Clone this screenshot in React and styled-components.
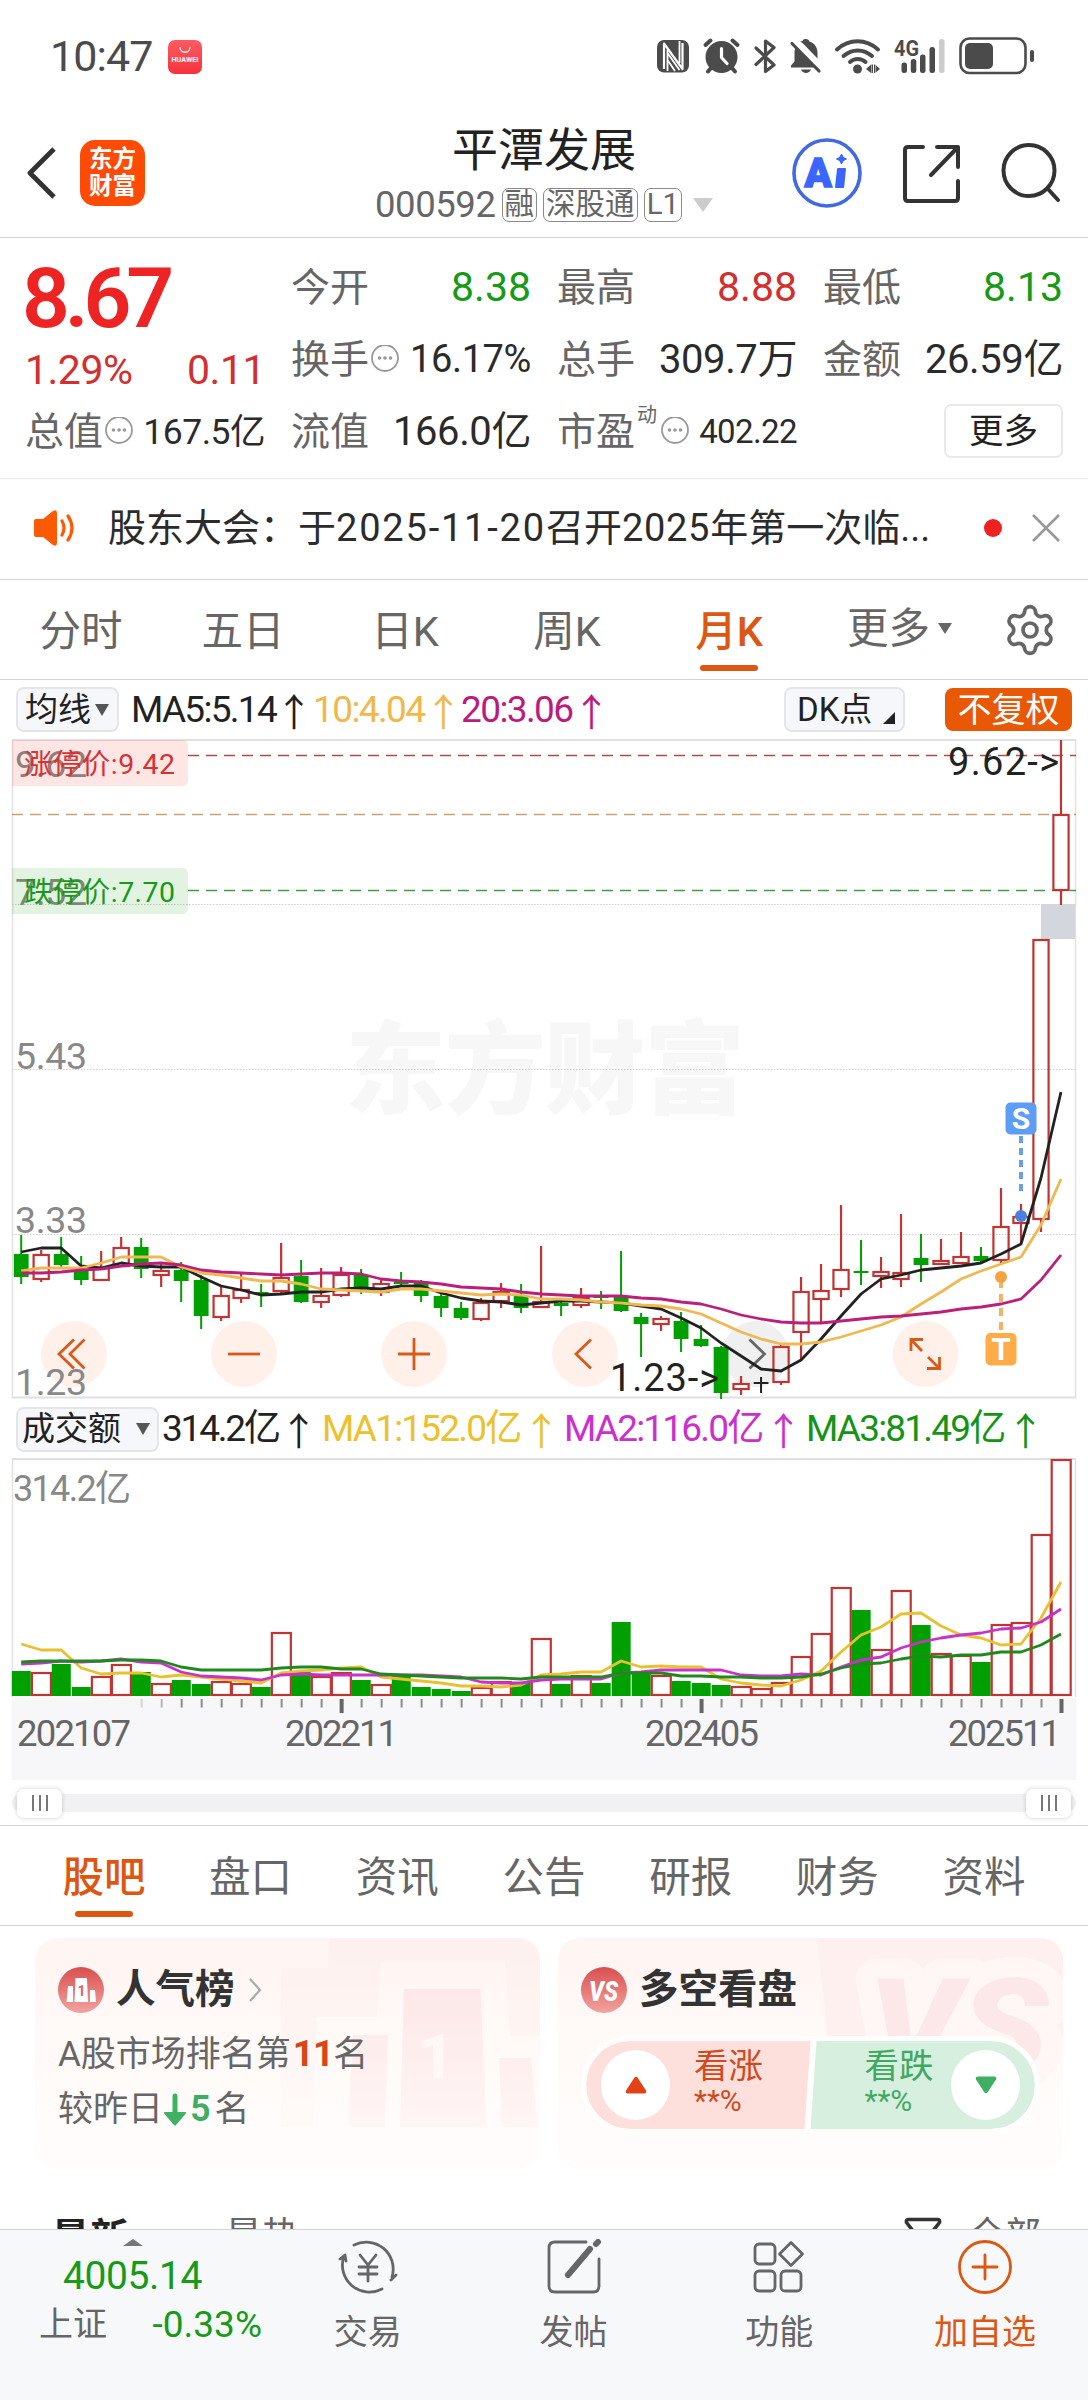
import React from 'react';
import styled, { createGlobalStyle, css } from 'styled-components';
import { Settings } from 'lucide-react';

const RED = '#d32f2f';
const GREEN = '#179a17';
const ORANGE = '#dd5712';
const GRAY = '#666';
const FONT = 'Roboto, "Noto Sans CJK SC", sans-serif';

const GlobalStyle = createGlobalStyle`
  body {
    margin: 0;
    background: #fff;
    font-family: ${FONT};
    color: #2b2b2b;
  }
`;

const Screen = styled.div`
  width: 1088px;
  height: 2400px;
  overflow: hidden;
  display: flex;
  flex-direction: column;
  background: #fff;
  line-height: 1.2;
  white-space: nowrap;

  & > * {
    flex-shrink: 0;
    box-sizing: border-box;
  }
`;

const Txt = styled.span`
  font-size: ${p => p.$size}px;
  line-height: 1.2;
  font-weight: ${p => p.$weight || 400};
  letter-spacing: ${p => p.$ls || 0}px;
  margin-left: ${p => p.$ml || 0}px;
  color: ${p => p.$color || 'inherit'};
`;

/* ---------- status bar ---------- */

const StatusBar = styled.div`
  height: 114px;
  padding: 0 54px 0 50px;
  display: flex;
  align-items: center;
  justify-content: space-between;
  color: #4b4b4b;
`;

const StatusSide = styled.div`
  display: flex;
  align-items: center;
`;

const StoreIcon = styled.div`
  width: 34px;
  height: 34px;
  margin-left: 15px;
  border-radius: 7px;
  background: linear-gradient(#ff5a60, #f5333f);
`;

const StatusIcons = () => (
  <svg width="378" height="40" viewBox="656 37 378 40" fill="#4b4b4b">
    <rect x="657" y="40" width="32" height="32.500" rx="7" />
    <path d="M664 69V43.500L682.500 69V43" stroke="#fff" strokeWidth="2.200" fill="none" strokeLinejoin="round" />
    <path d="M667.500 49.500V71M679.500 63V41M667.500 53l12 17M667.500 60l7.500 11" stroke="#fff" strokeWidth="1.800" fill="none" />

    <circle cx="721.500" cy="57" r="16" />
    <path d="M705.500 45l5-4.500M737.500 45l-5-4.500M711 68l-3 3.500M732 68l3 3.500" stroke="#4b4b4b" strokeWidth="4" strokeLinecap="round" />
    <path d="M721.500 48.500v9l5.500 6" stroke="#fff" strokeWidth="3.200" fill="none" strokeLinecap="round" />

    <path d="M756 48l18 17-8.500 6.500V41l8.500 6.500-18 17" stroke="#4b4b4b" strokeWidth="3.200" fill="none" strokeLinejoin="round" strokeLinecap="round" />

    <path d="M806 39c2 0 3 1 3.500 2.500 5 1.500 8 6 8 11v6l-14-14.500-3-2.500 2-.500c.500-1.500 1.500-2 3.500-2zM795.500 48l19 19.500H791v-2l3.500-4v-9c0-2 .300-3 1-4.500z" />
    <path d="M801 69.500h10c-1.500 4.500-8.500 4.500-10 0z" />
    <path d="M792 43.500l27 27.500" stroke="#4b4b4b" strokeWidth="3.200" strokeLinecap="round" />

    <g stroke="#4b4b4b" strokeWidth="4" fill="none" strokeLinecap="round">
      <path d="M837 49.500c12-11 29-11 41 0" />
      <path d="M843.500 56c8.500-7.500 20-7.500 28.500 0" />
      <path d="M850 62c4.500-4 11-4 15.500 0" />
    </g>
    <circle cx="857.500" cy="69" r="4.500" />
    <path d="M866 69l5-4.500V73zM880 69l-5-4.500V73zM871.500 64.500h1.500V73h-1.500zM874 64.500h1.500V73H874z" />

    <text x="894" y="56" fontSize="22.500" fontWeight="700" textLength="25" lengthAdjust="spacingAndGlyphs">4G</text>
    <rect x="901.500" y="62.500" width="5.500" height="10.500" rx="2.500" />
    <rect x="910.800" y="59" width="5.500" height="14" rx="2.500" />
    <rect x="920" y="54.500" width="5.500" height="18.500" rx="2.500" />
    <rect x="929.500" y="47" width="5.500" height="26" rx="2.500" />
    <rect x="939" y="39" width="5.500" height="34" rx="2.500" fill="#ccc" />

    <rect x="960.500" y="38.500" width="65" height="34.500" rx="9" fill="none" stroke="#4b4b4b" strokeWidth="2.600" />
    <rect x="965" y="43" width="28" height="26" rx="5" />
    <rect x="1030" y="50" width="4" height="12" rx="2" />
  </svg>
);

/* ---------- title bar ---------- */

const Header = styled.div`
  height: 124px;
  padding: 0 27px 6px 27px;
  border-bottom: 1px solid #d4d4d4;
  display: grid;
  grid-template-columns: 1fr auto 1fr;
  align-items: center;
`;

const HeaderSide = styled.div`
  display: flex;
  align-items: center;
  justify-content: ${p => (p.$end ? 'flex-end' : 'flex-start')};
`;

const Logo = styled.div`
  width: 65px;
  height: 66px;
  margin-left: 24px;
  border-radius: 15px;
  background: #ff4b05;
  color: #fff;
  font-size: 23.5px;
  font-weight: 700;
  line-height: 27px;
  display: flex;
  flex-direction: column;
  align-items: center;
  justify-content: center;
`;

const AssistantIcon = styled.svg`
  margin-right: 38px;
  font-family: ${FONT};
`;

const TitleBlock = styled.div`
  display: flex;
  flex-direction: column;
  align-items: center;
`;

const Title = styled.div`
  font-size: 46px;
  line-height: 56px;
  margin-bottom: 9px;
  color: #222;
`;

const CodeRow = styled.div`
  height: 36px;
  display: flex;
  align-items: center;
  gap: 6px;
  color: ${GRAY};
`;

const Tag = styled.span`
  box-sizing: border-box;
  height: 34px;
  padding: 0 2px;
  border: 1.5px solid #8a8a8a;
  border-radius: 7px;
  font-size: 29.5px;
  line-height: 31px;
`;

const Triangle = styled.i`
  width: 0;
  height: 0;
  border-left: ${p => p.$w / 2}px solid transparent;
  border-right: ${p => p.$w / 2}px solid transparent;
  border-top: ${p => (p.$up ? 0 : p.$h)}px solid ${p => p.$color};
  border-bottom: ${p => (p.$up ? p.$h : 0)}px solid ${p => p.$color};
  margin-left: ${p => p.$ml || 0}px;
`;

/* ---------- quote ---------- */

const Quote = styled.div`
  height: 241px;
  padding: 14px 25px 0 25px;
  border-bottom: 1px solid #e8e8e8;
  display: grid;
  grid-template-columns: repeat(4, 1fr);
  grid-template-rows: 72px 72px 72px;
  column-gap: 26px;
`;

const PriceCell = styled.div`
  grid-row: span 2;
  padding-top: 11px;
  color: ${RED};
`;

const Price = styled.div`
  height: 72px;
  line-height: 72px;
  font-size: 84px;
  font-weight: 600;
  letter-spacing: -5.2px;
  margin-left: -3px;
  color: #ee2424;
`;

const Change = styled.div`
  height: 72px;
  display: flex;
  align-items: center;
  justify-content: space-between;
  font-size: 41px;
  letter-spacing: -0.5px;
`;

const Cell = styled.div`
  display: flex;
  align-items: center;
  color: ${GRAY};
  font-size: 39px;

  ${Txt}:last-child {
    margin-left: auto;
  }
`;

const Sup = styled.span`
  align-self: flex-start;
  margin: 7px 2px 0 2px;
  font-size: 20px;
  line-height: 24px;
`;

const MoreButton = styled.button`
  justify-self: end;
  align-self: center;
  width: 119px;
  height: 54px;
  margin-top: -2px;
  padding: 0;
  border: 2px solid #e9e9e9;
  border-radius: 7px;
  background: #fff;
  font: 34.5px/48px ${FONT};
  color: #222;
`;

const InfoDots = () => (
  <svg width="30" height="30" viewBox="0 0 30 30">
    <circle cx="16" cy="13" r="13" fill="none" stroke="#999" strokeWidth="1.800" />
    <circle cx="10.500" cy="13" r="1.800" fill="#999" />
    <circle cx="16" cy="13" r="1.800" fill="#999" />
    <circle cx="21.500" cy="13" r="1.800" fill="#999" />
  </svg>
);

/* ---------- notice ---------- */

const Notice = styled.div`
  height: 101px;
  padding: 0 28px 3px 32px;
  border-bottom: 1px solid #d4d4d4;
  display: flex;
  align-items: center;
  font-size: 38px;
  line-height: 50px;
`;

const NoticeText = styled.div`
  flex: 1;
  margin-left: 32px;
`;

const Dot = styled.i`
  width: 18px;
  height: 18px;
  margin-right: 30px;
  border-radius: 50%;
  background: #f02020;
`;

/* ---------- tabs ---------- */

const TabBar = styled.div`
  height: 100px;
  padding: 0 ${p => p.$pad || 0}px;
  border-bottom: 1px solid #d4d4d4;
  display: flex;
`;

const Tab = styled.div`
  width: ${p => p.$w}px;
  display: flex;
  flex-direction: column;
  align-items: center;
  padding-top: 24px;
  box-sizing: border-box;
  font-size: 41.5px;
  line-height: 56px;
  color: ${GRAY};

  ${p => p.$active && css`
    color: ${ORANGE};
    font-weight: 500;

    &::after {
      content: '';
      width: 58px;
      height: 6px;
      margin-top: 5px;
      border-radius: 3px;
      background: ${ORANGE};
    }
  `}
`;

const TabMore = styled.div`
  display: flex;
  align-items: center;
  margin-left: 37px;
  padding-bottom: 2px;
  font-size: 41.5px;
  line-height: 56px;
  color: ${GRAY};
`;

const GearSlot = styled.div`
  display: flex;
  align-items: center;
  margin-left: 50px;
`;

/* ---------- indicator rows ---------- */

const IndicatorRow = styled.div`
  height: ${p => p.$h}px;
  padding: 0 16px;
  display: flex;
  align-items: center;
`;

const Chip = styled.div`
  box-sizing: border-box;
  width: ${p => p.$w}px;
  height: 45px;
  border: 2px solid #e3e5e9;
  border-radius: 8px;
  background: #f6f7fa;
  display: flex;
  align-items: center;
  padding-left: ${p => p.$pl || 7}px;
  font-size: 33px;
  line-height: 40px;
  color: #222;
`;

const SolidChip = styled(Chip)`
  height: 43px;
  margin-left: 40px;
  border: none;
  background: #e95804;
  color: #fff;
  font-size: 34px;
  justify-content: center;
  padding: 0;
`;

const Corner = styled.i`
  align-self: flex-end;
  margin: 0 0 6px 11px;
  border-left: 12px solid transparent;
  border-bottom: 12px solid #222;
`;

const Value = styled.div`
  box-sizing: border-box;
  width: ${p => p.$w}px;
  padding-left: ${p => p.$pl || 0}px;
  display: flex;
  align-items: center;
  font-size: 37px;
  line-height: 44px;
  letter-spacing: ${p => p.$ls || 0}px;
  color: ${p => p.$color};
`;

const Arrow = styled.span`
  width: 20px;
  margin-left: ${p => p.$ml || 6}px;
  display: flex;
  justify-content: center;
  font-family: "Noto Sans CJK SC", sans-serif;
  font-size: 38px;
  letter-spacing: 0;
`;

const Spacer = styled.div`
  flex: 1;
`;

/* ---------- charts ---------- */

const STEP = 19.996;
const xAt = i => 21.2 + i * STEP;

// [direction, high, body top, body bottom, low], in chart pixels
const CANDLES = [
  ['g', 495, 514, 537, 544], ['r', 510, 514, 540, 542], ['g', 497, 514, 525, 527],
  ['g', 516, 530, 540, 545], ['r', 511, 527, 541, 541], ['r', 497, 507, 527, 527],
  ['g', 498, 507, 529, 538], ['r', 523, 530, 536, 547], ['g', 522, 530, 541, 562],
  ['g', 535, 540, 576, 589], ['r', 547, 555, 578, 581], ['r', 533, 549, 559, 563],
  ['g', 544, 552, 553, 567], ['r', 503, 537, 552, 553], ['g', 520, 536, 562, 563],
  ['r', 528, 555, 563, 568], ['r', 527, 534, 556, 557], ['g', 529, 535, 549, 554],
  ['r', 540, 543, 553, 556], ['g', 532, 542, 544, 547], ['g', 540, 543, 556, 562],
  ['g', 553, 556, 568, 577], ['g', 562, 568, 578, 580], ['r', 558, 562, 580, 581],
  ['r', 543, 551, 562, 568], ['g', 544, 556, 568, 573], ['r', 506, 561, 568, 568],
  ['g', 562, 563, 566, 576], ['r', 548, 557, 566, 568], ['g', 551, 556, 557, 569],
  ['g', 511, 557, 571, 572], ['g', 573, 577, 584, 617], ['r', 576, 578, 585, 591],
  ['g', 572, 581, 599, 612], ['g', 585, 599, 606, 607], ['g', 606, 607, 653, 659],
  ['r', 636, 643, 650, 655], ['k', 637, 642, 644, 653], ['r', 605, 606, 643, 645],
  ['r', 537, 551, 593, 620], ['r', 524, 550, 560, 582], ['r', 465, 529, 550, 557],
  ['g', 500, 531, 532, 545], ['r', 517, 531, 537, 548], ['r', 474, 532, 540, 547],
  ['g', 494, 518, 525, 542], ['r', 499, 520, 525, 525], ['r', 492, 516, 524, 524],
  ['g', 507, 516, 521, 522], ['r', 448, 486, 521, 523], ['r', 464, 476, 484, 503],
  ['r', 199, 199, 480, 492], ['r', 0, 74, 151, 165],
];

const MA5 = [512, 508, 508, 526, 528, 523, 526, 527, 527, 537, 546, 550, 555, 554, 552, 552, 549, 548, 549, 546, 546, 553, 558, 561, 562, 565, 563, 561, 561, 562, 563, 566, 569, 578, 588, 603, 616, 629, 631, 620, 599, 576, 554, 539, 535, 530, 528, 526, 523, 514, 504, 438, 352];
const MA10 = [531, 528, 528, 528, 523, 517, 517, 517, 527, 533, 535, 538, 541, 541, 544, 549, 550, 551, 552, 549, 549, 551, 553, 555, 554, 555, 559, 559, 560, 562, 563, 565, 566, 569, 574, 583, 592, 599, 604, 604, 602, 597, 591, 585, 577, 564, 552, 539, 531, 524, 517, 485, 439];
const MA20 = [533, 533, 532, 530, 529, 526, 524, 523, 525, 530, 532, 533, 534, 535, 534, 533, 533, 534, 539, 541, 542, 544, 547, 548, 549, 552, 554, 555, 556, 556, 556, 558, 559, 562, 564, 569, 575, 579, 582, 583, 583, 581, 579, 577, 576, 574, 572, 569, 567, 564, 559, 540, 515];

const VOLUMES = [25, 24, 32, 9, 20, 32, 24, 13, 16, 12, 15, 13, 9, 64, 24, 20, 24, 16, 12, 20, 9, 7, 5, 9, 15, 13, 58, 12, 21, 13, 74, 23, 21, 15, 13, 11, 10, 8, 14, 40, 63, 109, 86, 47, 106, 71, 43, 41, 34, 72, 74, 162, 237];
const VMA1 = [185, 191, 191, 209, 215, 214, 214, 218, 216, 218, 220, 222, 224, 214, 212, 211, 209, 208, 218, 220, 222, 224, 227, 227, 228, 226, 216, 215, 213, 213, 202, 208, 207, 208, 208, 220, 224, 226, 227, 221, 212, 193, 176, 168, 155, 154, 167, 176, 179, 186, 185, 159, 123];
const VMA2 = [205, 204, 202, 203, 202, 200, 203, 204, 213, 217, 218, 219, 221, 216, 215, 216, 216, 216, 216, 216, 216, 217, 218, 223, 224, 224, 221, 220, 220, 220, 214, 213, 211, 211, 211, 211, 216, 217, 217, 215, 216, 208, 201, 198, 189, 183, 179, 176, 174, 170, 169, 163, 150];
const VMA3 = [203, 202, 202, 202, 202, 201, 201, 202, 208, 211, 211, 211, 211, 209, 208, 208, 210, 210, 215, 216, 217, 218, 219, 219, 219, 220, 218, 218, 218, 218, 214, 214, 214, 217, 217, 218, 218, 219, 219, 218, 215, 209, 205, 204, 200, 197, 198, 196, 196, 193, 193, 186, 175];

const CANDLE_COLORS = { r: '#c03434', g: '#00a000', k: '#222' };

const ChartSvg = styled.svg`
  display: block;
  font-family: ${FONT};
`;

const Line = ({ data, color }) => (
  <polyline
    points={data.map((y, i) => `${xAt(i)},${y}`).join(' ')}
    fill="none"
    stroke={color}
    strokeWidth="2.800"
    strokeLinejoin="round"
  />
);

const Candle = ({ i, data: [kind, high, top, bottom, low] }) => {
  const x = xAt(i);
  const color = CANDLE_COLORS[kind];
  if (kind === 'r') {
    return (
      <g stroke={color} strokeWidth="2.200" fill="none">
        <path d={`M${x} ${high}V${top}M${x} ${bottom}V${low}`} />
        <rect x={x - 7.6} y={top + 1} width="15.200" height={Math.max(bottom - top - 2, 2)} />
      </g>
    );
  }
  return (
    <g fill={color}>
      <rect x={x - 1} y={high} width="2" height={low - high} />
      <rect x={x - 7.4} y={top} width="14.800" height={Math.max(bottom - top, 2)} />
    </g>
  );
};

const Limit = ({ y, line, fill, stroke, color, children }) => (
  <g>
    <path d={`M188 ${line}H1076`} stroke={stroke} strokeWidth="1.600" strokeDasharray="11 7" />
    <path d={`M12 ${y}h170q6 0 6 6v34q0 6-6 6H12z`} fill={fill} />
    <text x="24" y={y + 34} fontSize="28.500" fill={color} textLength="151">{children}</text>
  </g>
);

const CONTROLS = [
  { x: 74, d: 'M74 599.500L59 614l15 14.500M84.500 599.500L70 614l14.500 14.500' },
  { x: 244, d: 'M228 614h32' },
  { x: 414, d: 'M398 614h32M414 598v32' },
  { x: 585, d: 'M591 599.500L576 614l15 14.500' },
  { x: 755.5, d: 'M749.500 599.500L764.500 614l-15 14.500', muted: true },
  { x: 925.5, d: 'M923 599.500H911V611M911 599.500L922 611M927 628.500h12.500V617M939.500 628.500L928 617' },
];

const PriceChart = () => (
  <ChartSvg width="1088" height="661" viewBox="0 -1 1088 661">
    <text x="345" y="366" fontSize="101" fontWeight="900" fill="#f7f7f7" textLength="400">东方财富</text>
    <path d="M12 0H1076M12 657.500H1076" stroke="#e0e0e2" strokeWidth="2" />
    <path d="M12.500 0V658M1075.500 0V658" stroke="#e0e0e2" strokeWidth="1.400" />
    <path d="M12 164.500H1076M12 329.500H1076M12 494.500H1076" stroke="#d2d2d2" strokeDasharray="1.500 1.500" />
    <rect x="1041" y="164" width="34" height="35" fill="#d3d7dd" />

    {CONTROLS.map(c => (
      <g key={c.x}>
        <circle cx={c.x} cy="614" r="33" fill={c.muted ? '#f0f0f0' : '#fff1ea'} />
        <path d={c.d} fill="none" stroke={c.muted ? '#666' : '#d75a1c'} strokeWidth="2.800" />
      </g>
    ))}

    <g fontSize="37.500" fill="#888">
      <text x="15" y="37" textLength="72">9.62</text>
      <text x="15" y="165" textLength="72">7.52</text>
      <text x="15" y="329" textLength="72">5.43</text>
      <text x="15" y="493" textLength="72">3.33</text>
      <text x="15" y="655" textLength="72">1.23</text>
    </g>

    <Limit y={0} line={15.5} fill="rgba(245, 50, 40, 0.12)" stroke="#ae4c4c" color="#d93030">涨停价:9.42</Limit>
    <Limit y={128} line={150.5} fill="rgba(20, 160, 20, 0.12)" stroke="#3fa03f" color={GREEN}>跌停价:7.70</Limit>
    <path d="M12 74.500H1076" stroke="#c8a274" strokeWidth="1.600" strokeDasharray="11 7" />

    {CANDLES.map((c, i) => <Candle key={i} i={i} data={c} />)}
    <Line data={MA5} color="#222" />
    <Line data={MA10} color="#efb952" />
    <Line data={MA20} color="#bb1f7a" />

    <text x="948" y="35" fontSize="38" fill="#222" textLength="111">9.62-&gt;</text>
    <text x="610" y="651" fontSize="38" fill="#222" textLength="109">1.23-&gt;</text>

    <path d="M1021 396V453" stroke="#6a9fe6" strokeWidth="4" strokeDasharray="7 5" />
    <circle cx="1021" cy="476" r="6" fill="#4a80e0" />
    <rect x="1005.500" y="362.500" width="31" height="32" rx="5" fill="#5e9df6" />
    <text x="1021" y="389" fontSize="30" fontWeight="700" fill="#fff" textAnchor="middle">S</text>

    <path d="M1001 540V592" stroke="#f5b266" strokeWidth="4" strokeDasharray="8 6" />
    <circle cx="1001" cy="537" r="6" fill="#f7a241" />
    <rect x="985.500" y="593" width="31" height="32.500" rx="5" fill="#ffab47" />
    <text x="1001" y="620" fontSize="31" fontWeight="700" fill="#fff" textAnchor="middle">T</text>
  </ChartSvg>
);

const VolumeChart = () => (
  <ChartSvg width="1088" height="322" viewBox="0 -1 1088 322">
    <rect x="12" y="239" width="1064" height="82" fill="#f7f7fa" />
    <path d="M12 0H1076" stroke="#e0e0e2" strokeWidth="2" />
    <path d="M12.500 0V238M1075.500 0V238" stroke="#e0e0e2" strokeWidth="1.400" />
    <text x="13" y="42" fontSize="36" fill="#888" textLength="118">314.2亿</text>
    {VOLUMES.map((h, i) => (
      CANDLES[i][0] === 'g' ? (
        <rect key={i} x={xAt(i) - 9.4} y={237 - h} width="19" height={h} fill="#00a000" />
      ) : (
        <rect key={i} x={xAt(i) - 9.3} y={238 - h} width="19" height={Math.max(h - 2, 2)} fill="none" stroke="#c03434" strokeWidth="2.200" />
      )
    ))}
    <Line data={VMA1} color="#e8c030" />
    <Line data={VMA2} color="#c832c8" />
    <Line data={VMA3} color="#1e8a1e" />
    {VOLUMES.map((h, i) => {
      if (i < 6) return null;
      const major = i === 16 || i === 34 || i === 52;
      return (
        <rect
          key={i}
          x={xAt(i) - (major ? 1.5 : 0.5)}
          y="240"
          width={major ? 4 : 2}
          height={major ? 14 : 8.5}
          fill={major ? '#666' : '#8c8c8c'}
          opacity={i === 6 ? 0.3 : i === 7 ? 0.6 : 1}
        />
      );
    })}
    <g fontSize="36.500" fill="#666">
      <text x="17" y="287" textLength="114">202107</text>
      <text x="285" y="287" textLength="113">202211</text>
      <text x="645" y="287" textLength="114">202405</text>
      <text x="948" y="287" textLength="113">202511</text>
    </g>
  </ChartSvg>
);

/* ---------- range slider ---------- */

const SliderArea = styled.div`
  height: 46px;
  padding: 8px 12px 0;
  border-bottom: 1px solid #d4d4d4;
`;

const Track = styled.div`
  height: 18px;
  margin-top: 6px;
  padding: 0 5px;
  border-radius: 9px;
  background: #f1f1f4;
  display: flex;
  align-items: center;
  justify-content: space-between;
`;

const Handle = styled.div`
  width: 45px;
  height: 29px;
  border-radius: 7px;
  background: #fff;
  box-shadow: 0 0 5px rgba(0, 0, 0, 0.18);
  display: flex;
  align-items: center;
  justify-content: center;
  gap: 5px;

  i {
    width: 2px;
    height: 16px;
    background: #777;
  }
`;

/* ---------- cards ---------- */

const Cards = styled.div`
  height: 243px;
  padding: 12px 25px 0 35px;
  display: grid;
  grid-template-columns: 1fr 1fr;
  column-gap: 18px;
`;

const Card = styled.div`
  position: relative;
  box-sizing: border-box;
  height: 231px;
  padding: 28px 23px 0;
  border-radius: 22px;
  overflow: hidden;
  background: linear-gradient(#fff5f3, #fffaf8 50%, #fffdfc);
`;

const CardArt = styled.svg`
  position: absolute;
  inset: 0;
  font-family: ${FONT};
`;

const CardTitle = styled.div`
  position: relative;
  display: flex;
  align-items: center;
  height: 48px;
  font-size: 39.5px;
  font-weight: 700;
  color: #333;

  span {
    margin: 0 13px 0 12px;
  }
`;

const CardLine = styled.div`
  position: relative;
  display: flex;
  align-items: center;
  height: 55px;
  margin-top: ${p => p.$mt || 0}px;
  font-size: 35px;
  color: ${GRAY};
`;

const Pill = styled.div`
  position: relative;
  box-sizing: border-box;
  width: 459px;
  height: 98px;
  margin-top: 22px;
  border: 5px solid #fffefd;
  border-radius: 49px;
  background: #fffefd;
  display: flex;
  overflow: hidden;
`;

const Half = styled.div`
  width: 50%;
  display: flex;
  align-items: center;
  box-sizing: border-box;
  color: ${p => (p.$up ? '#d04a20' : '#3fa963')};
  background: ${p => (p.$up ? '#fddfdc' : '#d7efdf')};
  border-radius: ${p => (p.$up ? '44px 0 0 44px' : '0 44px 44px 0')};
  clip-path: ${p => (p.$up
    ? 'polygon(0 0, 100% 0, calc(100% - 6px) 100%, 0 100%)'
    : 'polygon(6px 0, 100% 0, 100% 100%, 0 100%)')};
  padding: ${p => (p.$up ? '0 0 0 15px' : '0 15px 0 54px')};
  justify-content: ${p => (p.$up ? 'flex-start' : 'space-between')};
`;

const Round = styled.div`
  width: 69px;
  height: 70px;
  margin-right: ${p => p.$mr || 0}px;
  border-radius: 50%;
  background: #fff;
  display: flex;
  align-items: center;
  justify-content: center;
`;

const Vote = styled.div`
  display: flex;
  flex-direction: column;
  margin-bottom: 8px;
  font-size: 34.5px;
  line-height: 40px;

  small {
    font-size: 30px;
    line-height: 30px;
  }
`;

const PodiumArt = () => (
  <CardArt width="505" height="231" viewBox="35 1938 505 231">
    <defs>
      <linearGradient id="podium" x1="0" y1="1938" x2="0" y2="2132" gradientUnits="userSpaceOnUse">
        <stop offset="0" stopColor="#fbe3e3" />
        <stop offset="1" stopColor="#fff6f5" />
      </linearGradient>
      <linearGradient id="halo" x1="0" y1="1938" x2="0" y2="2127" gradientUnits="userSpaceOnUse">
        <stop offset="0" stopColor="#fdf0ee" />
        <stop offset="1" stopColor="#fffaf8" />
      </linearGradient>
    </defs>
    <path d="M329 1938H540V2036H510L505 1962H381L377 2017H317L313 2127H281V1968H328z" fill="url(#halo)" />
    <path d="M404 1989h76.500l6 138H400zM353 2035h35l-3 92h-37zM499 2058h32l6.500 69H502z" fill="url(#podium)" />
    <text x="418" y="2078" fontSize="62" fontWeight="900" fill="#fff8f6">1</text>
  </CardArt>
);

const VersusArt = () => (
  <CardArt width="505" height="231" viewBox="558 1938 505 231">
    <path d="M817 1938h246v100H828z" fill="#fef0ee" />
    <text
      x="868"
      y="2072"
      fontSize="132"
      fontWeight="900"
      fontStyle="italic"
      fill="#fce8e8"
      stroke="#fff7f5"
      strokeWidth="40"
      strokeLinejoin="round"
      paintOrder="stroke"
      textLength="180"
      lengthAdjust="spacingAndGlyphs"
    >
      VS
    </text>
  </CardArt>
);

const Badge = ({ id, children }) => (
  <svg width="46" height="46" viewBox="0 0 46 46" fontFamily={FONT}>
    <defs>
      <linearGradient id={id} x1="0" y1="0" x2="0" y2="1">
        <stop offset="0" stopColor="#d94f4f" />
        <stop offset="1" stopColor="#f2a39f" />
      </linearGradient>
    </defs>
    <circle cx="23" cy="23" r="23" fill={`url(#${id})`} />
    {children}
  </svg>
);

/* ---------- list header and bottom bar ---------- */

const ListHeader = styled.div`
  height: 60px;
  padding: 46px 47px 0 51px;
  overflow: hidden;
  display: flex;
  align-items: flex-start;
  color: ${GRAY};

  svg {
    margin: 2px 27px 0 0;
  }
`;

const BottomBar = styled.div`
  height: 171px;
  border-top: 1px solid #cfd1d4;
  background: #f6f8fa;
  display: flex;
`;

const IndexBox = styled.div`
  width: 265px;
  display: flex;
  flex-direction: column;
  align-items: center;
  gap: 7px;
  padding-top: 9px;
  box-sizing: border-box;
`;

const IndexRow = styled.div`
  align-self: stretch;
  height: 48px;
  margin-top: -6px;
  display: flex;
  justify-content: space-between;
  align-items: center;
  padding: 0 3px 0 39px;
`;

const NavItem = styled.div`
  width: 205.7px;
  display: flex;
  flex-direction: column;
  align-items: center;
  padding-top: 9px;
  box-sizing: border-box;
  font-size: 34px;
  line-height: 44px;
  color: ${p => (p.$accent ? ORANGE : GRAY)};

  svg {
    margin-bottom: 15px;
  }
`;

const NavIcon = ({ children }) => (
  <svg width="60" height="56" viewBox="0 0 60 56" fill="none" stroke="currentColor" strokeWidth="2.800" strokeLinecap="round" strokeLinejoin="round">
    {children}
  </svg>
);

const App = () => (
  <Screen>
    <GlobalStyle />
    <StatusBar>
      <StatusSide>
        <Txt $size={43} $ls={-0.9}>10:47</Txt>
        <StoreIcon>
          <svg width="34" height="34" viewBox="0 0 34 34" fontFamily={FONT}>
            <path d="M12 7c0 7 10 7 10 0" fill="none" stroke="#fff" strokeWidth="1.300" />
            <text x="3.500" y="22" fontSize="7" fontWeight="700" fill="#fff" textLength="27" lengthAdjust="spacingAndGlyphs">HUAWEI</text>
          </svg>
        </StoreIcon>
      </StatusSide>
      <StatusIcons />
    </StatusBar>

    <Header>
      <HeaderSide>
        <svg width="29" height="52" viewBox="0 0 29 52">
          <path d="M27 2L3 26l24 24" fill="none" stroke="#333" strokeWidth="4.800" strokeLinejoin="round" />
        </svg>
        <Logo>
          <span>东方</span>
          <span>财富</span>
        </Logo>
      </HeaderSide>
      <TitleBlock>
        <Title>平潭发展</Title>
        <CodeRow>
          <Txt $size={36.5} $ls={-0.4}>000592</Txt>
          <Tag>融</Tag>
          <Tag>深股通</Tag>
          <Tag>L1</Tag>
          <Triangle $w={21} $h={14} $color="#ccc" $ml={5} />
        </CodeRow>
      </TitleBlock>
      <HeaderSide $end>
        <AssistantIcon width="70" height="70" viewBox="0 0 70 70">
          <circle cx="35" cy="35" r="33" fill="none" stroke="#4169e1" strokeWidth="3.600" />
          <text x="12.500" y="49" fontSize="40" fontWeight="900" fill="#3a66ff" stroke="#3a66ff" strokeWidth="1.500">A</text>
          <path d="M46 31h7l-1.800 18H44z" fill="#3a66ff" stroke="#3a66ff" strokeWidth="2" strokeLinejoin="round" />
          <path d="M49.500 16l1.700 3.300 3.300 1.700-3.300 1.700-1.700 3.300-1.700-3.300-3.300-1.700 3.300-1.700z" fill="#3a66ff" stroke="#3a66ff" />
        </AssistantIcon>
        <svg width="60" height="60" viewBox="0 0 60 60" fill="none" stroke="#333" strokeWidth="4" strokeLinecap="round" strokeLinejoin="round">
          <path d="M23 4H8Q5 4 5 7v48q0 3 3 3h47q3 0 3-3V38M37 4h21v20M57 5L31 32" />
        </svg>
        <svg width="101" height="60" viewBox="0 0 101 60" fill="none" stroke="#333" strokeWidth="4" strokeLinecap="round">
          <circle cx="69" cy="27.500" r="25.500" />
          <path d="M88 46l10 11" />
        </svg>
      </HeaderSide>
    </Header>

    <Quote>
      <PriceCell>
        <Price>8.67</Price>
        <Change><span>1.29%</span><span>0.11</span></Change>
      </PriceCell>
      <Cell>今开<Txt $size={41} $color={GREEN}>8.38</Txt></Cell>
      <Cell>最高<Txt $size={41} $color={RED}>8.88</Txt></Cell>
      <Cell>最低<Txt $size={41} $color={GREEN}>8.13</Txt></Cell>
      <Cell>换手<InfoDots /><Txt $size={38} $ls={-0.4} $color="#2b2b2b">16.17%</Txt></Cell>
      <Cell>总手<Txt $size={40} $ls={-0.4} $color="#2b2b2b">309.7万</Txt></Cell>
      <Cell>金额<Txt $size={40} $ls={-0.4} $color="#2b2b2b">26.59亿</Txt></Cell>
      <Cell>总值<InfoDots /><Txt $size={35.5} $ls={-0.5} $color="#2b2b2b">167.5亿</Txt></Cell>
      <Cell>流值<Txt $size={40} $ls={-0.4} $color="#2b2b2b">166.0亿</Txt></Cell>
      <Cell>市盈<Sup>动</Sup><InfoDots /><Txt $size={33} $ls={-0.6} $color="#2b2b2b">402.22</Txt></Cell>
      <MoreButton>更多</MoreButton>
    </Quote>

    <Notice>
      <svg width="44" height="38" viewBox="0 0 44 38">
        <path d="M2 12q0-2 2-2h7L21 2q4-2 4 2v30q0 4-4 2l-10-8H4q-2 0-2-2z" fill="#ff5a00" />
        <path d="M30 12q4 7 0 14M36 7q8 12 0 24" fill="none" stroke="#ff5a00" strokeWidth="3.200" strokeLinecap="round" />
      </svg>
      <NoticeText>
        股东大会：于<Txt $size={38} $ls={1.8}>2025-11-20</Txt>召开<Txt $size={38} $ls={0.7}>2025</Txt>年第一次临...
      </NoticeText>
      <Dot />
      <svg width="28" height="28" viewBox="0 0 28 28">
        <path d="M1 1l26 26M27 1L1 27" stroke="#999" strokeWidth="2.600" />
      </svg>
    </Notice>

    <TabBar>
      {['分时', '五日', '日K', '周K', '月K'].map(t => (
        <Tab key={t} $w={162} $active={t === '月K'}>{t}</Tab>
      ))}
      <TabMore>更多<Triangle $w={14} $h={11} $color={GRAY} $ml={8} /></TabMore>
      <GearSlot><Settings size={56} strokeWidth={1.6} color="#666" /></GearSlot>
    </TabBar>

    <IndicatorRow $h={59}>
      <Chip $w={103}>均线<Triangle $w={14} $h={12} $color="#555" $ml={4} /></Chip>
      <Value $w={194} $pl={12} $ls={-1.7} $color="#222">MA5:5.14<Arrow $ml={8}>↑</Arrow></Value>
      <Value $w={148} $ls={-1.6} $color="#f0b84c">10:4.04<Arrow $ml={9}>↑</Arrow></Value>
      <Value $w={150} $ls={-1.6} $color="#bd1b7c">20:3.06<Arrow $ml={9}>↑</Arrow></Value>
      <Spacer />
      <Chip $w={121} $pl={11}>DK点<Corner /></Chip>
      <SolidChip $w={127}>不复权</SolidChip>
    </IndicatorRow>

    <PriceChart />

    <IndicatorRow $h={58}>
      <Chip $w={143} $pl={4}>成交额<Triangle $w={14} $h={12} $color="#555" $ml={15} /></Chip>
      <Value $w={163} $pl={3} $ls={-2.2} $color="#222">314.2亿<Arrow $ml={10}>↑</Arrow></Value>
      <Value $w={242} $ls={-1.8} $color="#ecc12c">MA1:152.0亿<Arrow $ml={11}>↑</Arrow></Value>
      <Value $w={242} $ls={-1.8} $color="#cb30cb">MA2:116.0亿<Arrow $ml={11}>↑</Arrow></Value>
      <Value $w={242} $ls={-1.8} $color="#149414">MA3:81.49亿<Arrow $ml={11}>↑</Arrow></Value>
    </IndicatorRow>

    <VolumeChart />

    <SliderArea>
      <Track>
        <Handle><i /><i /><i /></Handle>
        <Handle><i /><i /><i /></Handle>
      </Track>
    </SliderArea>

    <TabBar $pad={30.6}>
      {['股吧', '盘口', '资讯', '公告', '研报', '财务', '资料'].map(t => (
        <Tab key={t} $w={146.7} $active={t === '股吧'}>{t}</Tab>
      ))}
    </TabBar>

    <Cards>
      <Card>
        <PodiumArt />
        <CardTitle>
          <Badge id="rank">
            <path d="M10 19h5v16H8.500zM17.500 11H29l1 24H16.500zM32 23h5l1 12h-6z" fill="#fff" />
            <text x="19.500" y="29" fontSize="14" fontWeight="700" fill="#dd6462">1</text>
          </Badge>
          <span>人气榜</span>
          <svg width="14" height="24" viewBox="0 0 14 24">
            <path d="M2 1l10 11L2 23" fill="none" stroke="#aaa" strokeWidth="2.200" />
          </svg>
        </CardTitle>
        <CardLine $mt={13}>
          A股市场排名第<Txt $size={37} $weight={700} $ls={-1} $ml={2} $color="#d8451a">11</Txt>名
        </CardLine>
        <CardLine>
          较昨日
          <svg width="24" height="34" viewBox="0 0 24 34">
            <path d="M12 3v18" stroke="#3fb163" strokeWidth="5" strokeLinecap="round" />
            <path d="M2 19h20q2 0 .500 2L13 32q-1 1-2 0L1.500 21Q0 19 2 19z" fill="#3fb163" />
          </svg>
          <Txt $size={36} $weight={600} $ml={3} $color="#3fae62">5</Txt>
          <Txt $size={35} $ml={4}>名</Txt>
        </CardLine>
      </Card>
      <Card>
        <VersusArt />
        <CardTitle>
          <Badge id="versus">
            <text x="8" y="34" fontSize="28" fontWeight="900" fontStyle="italic" fill="#fff" textLength="29" lengthAdjust="spacingAndGlyphs">VS</text>
          </Badge>
          <span>多空看盘</span>
        </CardTitle>
        <Pill>
          <Half $up>
            <Round $mr={24}>
              <svg width="22" height="18" viewBox="0 0 22 18">
                <path d="M9.500 1.500q1.500-1.500 3 0l8.500 13q1 3-2 3H3q-3 0-2-3z" fill="#e34214" />
              </svg>
            </Round>
            <Vote>看涨<small>**%</small></Vote>
          </Half>
          <Half>
            <Vote>看跌<small>**%</small></Vote>
            <Round>
              <svg width="22" height="18" viewBox="0 0 22 18">
                <path d="M9.500 16.500q1.500 1.500 3 0l8.500-13q1-3-2-3H3q-3 0-2 3z" fill="#3fae62" />
              </svg>
            </Round>
          </Half>
        </Pill>
      </Card>
    </Cards>

    <ListHeader>
      <Txt $size={39} $weight={700} $color="#222">最新</Txt>
      <Txt $size={37} $ml={96}>最热</Txt>
      <Spacer />
      <svg width="38" height="36" viewBox="0 0 38 36">
        <path d="M4 2.500h30q2 0 1.500 3L25 19v14l-12-6v-8L2.500 5.500Q2 2.500 4 2.500z" fill="none" stroke="#333" strokeWidth="3.600" strokeLinejoin="round" />
      </svg>
      <Txt $size={36}>全部</Txt>
    </ListHeader>

    <BottomBar>
      <IndexBox>
        <Triangle $up $w={20} $h={7} $color="#777" />
        <Txt $size={39} $ls={-0.4} $color={GREEN}>4005.14</Txt>
        <IndexRow>
          <Txt $size={34} $color={GRAY}>上证</Txt>
          <Txt $size={37} $color={GREEN}>-0.33%</Txt>
        </IndexRow>
      </IndexBox>
      <NavItem>
        <NavIcon>
          <path d="M16 6a27 27 0 0 1 38 32M44 50A27 27 0 0 1 6 17M2 20l5-4 1 6M58 36l-5 5" />
          <path d="M22 16l8 10 8-10M30 26v16M21 28h18M21 35h18" />
        </NavIcon>
        交易
      </NavItem>
      <NavItem>
        <NavIcon>
          <path d="M42 3H11Q5 3 5 9v38q0 6 6 6h38q6 0 6-6V20" />
          <path d="M24 36l22-26" strokeWidth="6" />
          <path d="M52 5l2-2" strokeWidth="6" />
        </NavIcon>
        发帖
      </NavItem>
      <NavItem>
        <NavIcon>
          <rect x="6" y="5" width="20" height="20" rx="4" />
          <rect x="6" y="32" width="20" height="20" rx="4" />
          <rect x="32" y="32" width="20" height="20" rx="4" />
          <path d="M42 3.500L53.500 15 42 26.500 30.500 15z" />
        </NavIcon>
        功能
      </NavItem>
      <NavItem $accent>
        <NavIcon>
          <circle cx="30" cy="28" r="25.500" />
          <path d="M30 16v24M18 28h24" />
        </NavIcon>
        加自选
      </NavItem>
    </BottomBar>
  </Screen>
);

export default App;
